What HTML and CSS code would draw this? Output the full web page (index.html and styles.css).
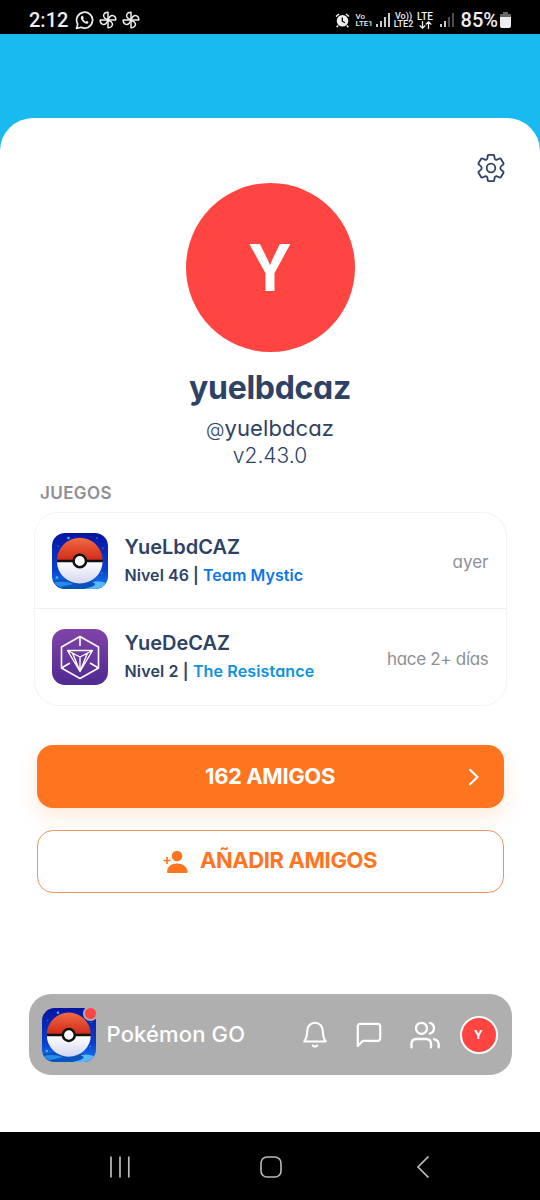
FILE: index.html
```html
<!DOCTYPE html>
<html lang="es">
<head>
<meta charset="utf-8">
<title>Perfil</title>
<link rel="stylesheet" href="styles.css">
</head>
<body>
<svg width="0" height="0" class="defs" aria-hidden="true">
  <defs>
    <linearGradient id="sky" x1="0" y1="0" x2="0" y2="1"><stop offset="0" stop-color="#0714a0"/><stop offset=".65" stop-color="#0a3fd0"/><stop offset="1" stop-color="#1580ee"/></linearGradient>
    <linearGradient id="red" x1="0" y1="0" x2="0" y2="1"><stop offset="0" stop-color="#f26a45"/><stop offset="1" stop-color="#cf2a16"/></linearGradient>
    <linearGradient id="pale" x1="0" y1="0" x2="0" y2="1"><stop offset="0" stop-color="#fff"/><stop offset="1" stop-color="#d3d6f2"/></linearGradient>
    <linearGradient id="violet" x1="0" y1="0" x2="0" y2="1"><stop offset="0" stop-color="#8144a8"/><stop offset="1" stop-color="#4f2a92"/></linearGradient>
    <clipPath id="tile"><rect width="56" height="56" rx="13"/></clipPath>
    <symbol id="pogo" viewBox="0 0 56 56">
      <g clip-path="url(#tile)">
        <rect width="56" height="56" fill="url(#sky)"/>
        <path d="M0 48Q28 42 56 51V56H0Z" fill="#0953bd"/>
        <path d="M32 56Q49 52 40 49Q47 47 54 50Q56 52 47 56Z" fill="#5ab7fa"/>
        <path d="M0 50Q12 47 22 51L8 54Z" fill="#268be8"/>
        <g fill="#47b6ff"><circle cx="16.500" cy="5" r="1.300"/><circle cx="5" cy="44.500" r="1.300"/><circle cx="45" cy="5" r=".7"/><circle cx="51" cy="15" r=".6"/><circle cx="6" cy="13" r=".6"/><circle cx="50" cy="40" r=".7"/></g>
        <path d="M5 27.500a22.800 22.800 0 0 1 45.600 0Z" fill="url(#red)"/>
        <path d="M5 28.500a22.800 22 0 0 0 45.600 0Z" fill="url(#pale)"/>
        <path d="M5 28H50.600" stroke="#111" stroke-width="2.400"/>
        <circle cx="27.800" cy="28" r="6.200" fill="#fff" stroke="#111" stroke-width="2.600"/>
      </g>
    </symbol>
    <symbol id="fan" viewBox="0 0 18 18"><g fill="none" stroke="#eee" stroke-width="1.500" stroke-linejoin="round">
      <path id="blade" d="M9 9V1.200C4.600 1 3.600 5 5.400 6.800Q6.500 8 9 9"/><use href="#blade" transform="rotate(90 9 9)"/><use href="#blade" transform="rotate(180 9 9)"/><use href="#blade" transform="rotate(270 9 9)"/></g></symbol>
  </defs>
</svg>

<header class="status">
  <span class="clock">2:12</span>
  <svg class="wa" width="19" height="19" viewBox="0 0 19 19" fill="none"><path d="M1.500 17.500l1.200-4.300A8 8 0 1 1 6 16.300Z" stroke="#eee" stroke-width="1.700" stroke-linejoin="round"/><path d="M6.800 5c-1.500.8-1.300 3 .4 5s4.300 3.700 5.900 2.200c.7-.7.500-1.200-.3-1.700-1.300-.8-1.500-.3-2.100.3-1-.4-2.200-1.600-2.600-2.700.8-.7.8-1 .3-2.200-.3-.7-.8-1.300-1.600-.9Z" fill="#eee"/></svg>
  <svg class="fan" width="18" height="18"><use href="#fan"/></svg>
  <svg class="fan" width="18" height="18"><use href="#fan"/></svg>
  <span class="spring"></span>
  <svg width="15" height="15" viewBox="0 0 15 15"><circle cx="7.500" cy="7.800" r="5.800" fill="#eee"/><path d="M1 3.500 4 1M14 3.500 11 1M3 12.500 1.800 14.200M12 12.500l1.200 1.700" stroke="#eee" stroke-width="1.600"/><path d="M7.300 4.500V8.200L10 9.800" stroke="#000" stroke-width="1.300" fill="none"/></svg>
  <span class="volte volte-one">Vo<br>LTE1</span>
  <svg class="bars-one" width="14" height="16" viewBox="0 0 14 16"><path d="M1 12v3M5 9v6M9 5v10M13 1v14" stroke="#eee" stroke-width="1.700"/></svg>
  <span class="volte volte-two">Vo))<br>LTE2</span>
  <span class="lte"><b>LTE</b><svg width="13" height="8" viewBox="0 0 13 8" fill="none" stroke="#eee" stroke-width="1.300"><path d="M3.500 0v7M.7 4.500l2.800 2.700 2.800-2.700M9.500 8V1M6.700 3.500 9.500.8l2.800 2.700"/></svg></span>
  <svg class="bars-two" width="14" height="16" viewBox="0 0 14 16"><path d="M1 12v3M5 9v6" stroke="#eee" stroke-width="1.700"/><path d="M9 5v10M13 1v14" stroke="#666" stroke-width="1.500"/></svg>
  <span class="percent">85%</span>
  <svg width="11" height="16" viewBox="0 0 11 16"><path d="M3 0h5v2h2q1 0 1 1v2H0V3q0-1 1-1h2Z" fill="#666"/><path d="M0 5h11v9q0 2-2 2H2q-2 0-2-2Z" fill="#eee"/></svg>
</header>

<main class="screen">
  <section class="sheet">
    <div class="tools">
      <svg width="30" height="30" viewBox="0 0 30 30" fill="none" stroke="#2d4265" stroke-width="1.800" stroke-linejoin="round"><path d="M12.600 1.800h4.800q.6 0 .8.700l.5 3q.2.800.9 1.100.7.400 1.400 0l2.700-1.100q.8-.3 1.300.5l2.500 4.200q.4.700-.2 1.200l-2 1.700q-1 .8-1 1.900t1 1.900l2 1.700q.6.500.2 1.200L25 24q-.5.800-1.300.5L21 23.400q-.7-.4-1.400 0-.7.300-.9 1.100l-.5 3q-.2.700-.8.700h-4.800q-.6 0-.8-.7l-.5-3q-.2-.8-.9-1.100-.7-.4-1.400 0l-2.700 1.100q-.8.300-1.300-.5l-2.500-4.200q-.4-.7.200-1.200l2-1.700q1-.8 1-1.900t-1-1.900l-2-1.700q-.6-.5-.2-1.200L5 6q.5-.8 1.300-.5L9 6.600q.7.400 1.400 0 .7-.3.900-1.100l.5-3q.2-.7.800-.7Z"/><circle cx="15" cy="15" r="4.300"/></svg>
    </div>
    <div class="avatar"><span>Y</span></div>
    <h1 class="name">yuelbdcaz</h1>
    <p class="handle"><span class="at">@</span>yuelbdcaz</p>
    <p class="version">v2.43.0</p>

    <h2 class="label">JUEGOS</h2>
    <div class="games">
      <article class="game">
        <svg width="56" height="56"><use href="#pogo"/></svg>
        <div class="info"><h3>YueLbdCAZ</h3><p class="level-one">Nivel 46 | <span class="mystic">Team Mystic</span></p></div>
        <span class="when">ayer</span>
      </article>
      <article class="game">
        <svg width="56" height="56" viewBox="0 0 56 56"><rect width="56" height="56" rx="13" fill="url(#violet)"/><g fill="none" stroke="#fff" stroke-width="1.600" stroke-linejoin="round"><path d="M28 7.500 46.500 18v21L28 49.500 9.500 39V18Z"/><path d="M28 7.500v9.500M9.500 39l8.500-5M46.500 39 38 34"/><path d="M15.500 21.500h25L28 42.500ZM15.500 21.500 28 28l12.500-6.500M28 28v14.500M20.500 24 28 42.500 35.500 24" stroke-width="1.400"/></g></svg>
        <div class="info"><h3>YueDeCAZ</h3><p class="level-two">Nivel 2 | <span class="resistance">The Resistance</span></p></div>
        <span class="when when-two">hace 2+ días</span>
      </article>
    </div>

    <button class="btn friends"><span>162 AMIGOS</span>
      <svg class="chevron" width="12" height="18" viewBox="0 0 12 18" fill="none" stroke="#fff" stroke-width="2.200" stroke-linecap="round" stroke-linejoin="round"><path d="M2 1.800 9.500 9 2 16.200"/></svg></button>
    <button class="btn add">
      <svg width="25" height="24" viewBox="0 0 25 24" fill="#ff751f"><circle cx="14" cy="6" r="5.300"/><path d="M4 22c0-5.500 4.500-8.600 10-8.600S24.500 16.500 24.500 22q0 1-1 1H5q-1 0-1-1Z"/><path d="M4 7v7M.5 10.500h7" stroke="#ff751f" stroke-width="1.700"/></svg>
      <span>AÑADIR AMIGOS</span></button>

    <nav class="dock">
      <span class="app"><svg width="54" height="54"><use href="#pogo"/></svg><i class="dot"></i></span>
      <span class="app-name">Pokémon GO</span>
      <svg class="bell" width="24" height="28" viewBox="0 0 24 28" fill="none" stroke="#fff" stroke-width="2.100" stroke-linecap="round" stroke-linejoin="round"><path d="M1.300 20.500C4 17 4 14 4.300 9.500a7.700 7.700 0 0 1 15.400 0C20 14 20 17 22.700 20.500Z"/><path d="M9.800 24.500q2.200 2.200 4.400 0"/></svg>
      <svg class="chat" width="26" height="26" viewBox="0 0 26 26" fill="none" stroke="#fff" stroke-width="2.200" stroke-linejoin="round"><path d="M1.800 24V4.300q0-2.500 2.500-2.500h17.400q2.500 0 2.500 2.500v12q0 2.500-2.500 2.500H7Z"/></svg>
      <svg class="people" width="30" height="28" viewBox="0 0 30 28" fill="none" stroke="#fff" stroke-width="2.300" stroke-linecap="round"><circle cx="11.500" cy="7.300" r="5.500"/><path d="M1.500 26.500v-3.500q0-5 5-5h9.500q5 0 5 5v3.500M19.800 1.900a5.600 5.600 0 0 1 0 10.800M24 18.100q4.700 1.200 4.700 5.500v2.900"/></svg>
      <span class="me">Y</span>
    </nav>
  </section>
</main>

<footer class="keys">
  <svg width="22" height="22" viewBox="0 0 22 22" stroke="#bbb" stroke-width="1.700"><path d="M2 .5v21M11 .5v21M19.800 .5v21"/></svg>
  <svg class="home" width="22" height="22" viewBox="0 0 22 22" fill="none" stroke="#bbb" stroke-width="1.600"><rect x="1" y="1" width="20" height="20" rx="6"/></svg>
  <svg width="14" height="22" viewBox="0 0 14 22" fill="none" stroke="#bbb" stroke-width="1.700"><path d="M12.500.5 2 11l10.500 10.500"/></svg>
</footer>
</body>
</html>
```
FILE: styles.css
```css
* { box-sizing: border-box; margin: 0; padding: 0; }
body { width: 540px; height: 1200px; overflow: hidden; display: flex; flex-direction: column; background: #fff; color: #2d4265; font-family: Inter, "Noto Sans", sans-serif; font-feature-settings: "cv11"; }
svg { flex: none; display: block; }
.defs { position: absolute; }
span, h1, h2, h3, p { white-space: nowrap; }

.status { height: 34px; background: #000; color: #eee; display: flex; align-items: center; padding: 6px 29px 0; font-family: Roboto, sans-serif; flex: none; }
.clock { font-size: 20px; font-weight: 500; line-height: 28px; width: 46px; }
.fan { margin-left: 5px; }
.spring { flex: 1; }
.volte { font-size: 8px; line-height: 7px; font-weight: 500; }
.volte-one { margin-left: 6px; width: 20px; }
.volte-two { margin-left: 4px; width: 20px; font-size: 9px; line-height: 8px; text-align: center; }
.lte { display: flex; flex-direction: column; align-items: center; margin-left: 3px; width: 17px; }
.lte b { font-size: 10px; line-height: 9px; font-weight: 500; }
.bars-two { margin-left: 6px; }
.percent { font-size: 20px; font-weight: 500; line-height: 28px; margin: 0 2px 0 7px; }

.screen { flex: none; height: 1098px; background: #18baf0; padding-top: 84px; }
.sheet { height: 1014px; background: #fff; border-radius: 33px 33px 0 0; display: flex; flex-direction: column; align-items: center; }
.tools { height: 65px; width: 100%; display: flex; justify-content: flex-end; padding: 35px 34px 0; }
.avatar { width: 169px; height: 169px; flex: none; border-radius: 50%; background: #ff4541; color: #fff; display: flex; align-items: center; justify-content: center; font-size: 65px; font-weight: 700; }
.avatar span { transform: scaleX(.92); }
.name { font-size: 32px; font-weight: 700; line-height: 40px; margin-top: 16px; letter-spacing: -.3px; }
.handle { font-size: 22px; line-height: 28px; height: 28px; margin-top: 6px; letter-spacing: .1px; }
.at { font-size: 19px; font-weight: 300; line-height: 1; }
.version { font-size: 21px; font-weight: 300; line-height: 28px; }
.label { align-self: flex-start; margin: 13px 0 0 40px; font-size: 17px; font-weight: 600; line-height: 20px; color: #8e8f94; letter-spacing: .4px; }
.games { width: 473px; height: 194px; margin-top: 9px; border: 1px solid #f3f3f4; border-radius: 24px; flex: none; }
.game { height: 95px; display: flex; align-items: center; padding: 0 17px; }
.game + .game { height: 97px; border-top: 1px solid #f0f0f1; }
.info { margin-left: 17px; flex: 1; padding-bottom: 2px; }
h3 { font-size: 20px; font-weight: 600; line-height: 28px; }
.info p { font-size: 16px; font-weight: 600; line-height: 24px; margin-top: 2px; }
.level-one { letter-spacing: .06px; }
.level-two { letter-spacing: .15px; }
.mystic { color: #0b77e8; }
.resistance { color: #0b93e0; }
.when { color: #8e8f94; font-size: 17px; margin-top: 3px; }
.when-two { letter-spacing: -.3px; }
.btn { width: 467px; height: 63px; flex: none; border-radius: 16px; border: 0; font: 700 22px/28px Inter, sans-serif; letter-spacing: -.4px; display: flex; align-items: center; justify-content: center; }
.friends { margin-top: 39px; background: #ff751f; color: #fff; box-shadow: 0 8px 20px rgba(255,117,31,.17); position: relative; }
.friends > span { margin-top: -2px; }
.chevron { position: absolute; right: 24px; top: 23px; }
.add { margin-top: 22px; background: transparent; color: #ff751f; border: 1px solid #ed9563; gap: 12px; }
.add span { margin-top: -3px; }

.dock { width: 483px; height: 81px; flex: none; margin-top: 101px; background: #afafaf; border-radius: 22px; display: flex; align-items: center; padding: 0 14px 0 13px; color: #fff; }
.app { position: relative; width: 54px; height: 54px; }
.dot { position: absolute; right: 0; top: 0; width: 11px; height: 11px; border-radius: 50%; background: #ff4541; box-shadow: 0 0 0 2px #afafaf; }
.app-name { font-size: 22px; font-weight: 500; margin: -1px 0 0 11px; width: 196px; letter-spacing: .15px; }
.chat { margin-left: 29px; }
.people { margin-left: 28px; }
.me { margin-left: auto; width: 38px; height: 38px; border: 2px solid #fff; border-radius: 50%; background: #ff4541; display: flex; align-items: center; justify-content: center; font-size: 12px; font-weight: 700; }

.keys { flex: none; height: 68px; background: #000; display: flex; align-items: center; justify-content: space-between; padding: 1px 110px 0 109px; }
.home { margin-right: 6px; }
```
